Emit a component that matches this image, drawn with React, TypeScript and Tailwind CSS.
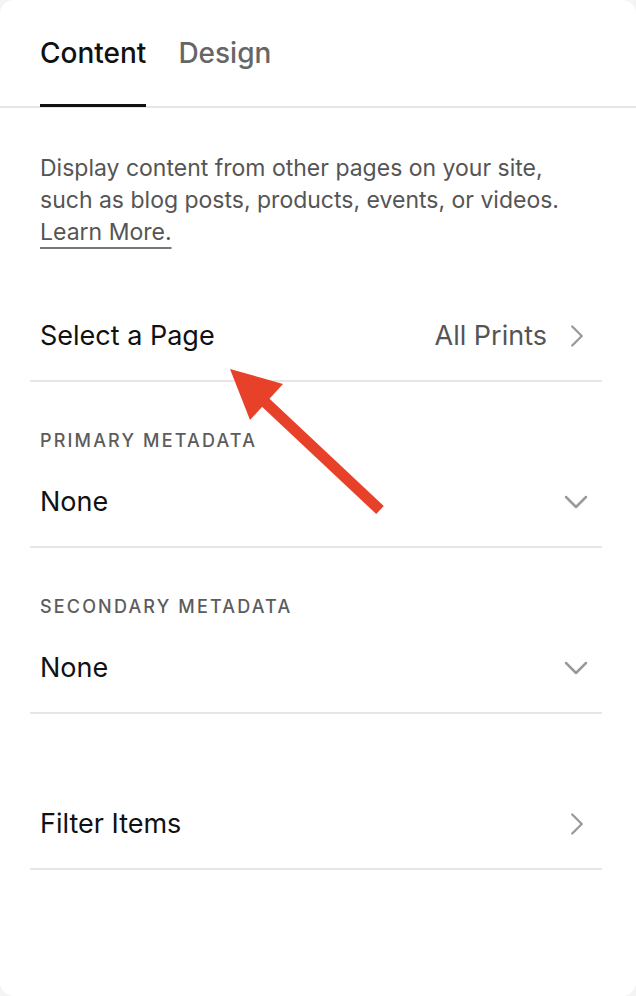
import { ChevronRight, ChevronDown } from "lucide-react";

const font = { fontFamily: "Inter, 'Liberation Sans', sans-serif" };

function Divider() {
  return <div className="ml-[30px] mr-[34px] h-[2px] bg-[#e6e6e6]" />;
}

function NavRow({ label, value }: { label: string; value?: string }) {
  return (
    <div className="flex h-[88px] items-center justify-between pl-[40px] pr-[40px]">
      <span className="text-[27px] text-[#111]">{label}</span>
      <div className="flex items-center gap-[11px]">
        {value && <span className="text-[27px] text-[#555]">{value}</span>}
        <ChevronRight className="h-[38px] w-[38px] text-[#9a9a9a]" strokeWidth={1.5} />
      </div>
    </div>
  );
}

function SelectBlock({ title }: { title: string }) {
  return (
    <div className="pt-[49px]">
      <div className="pl-[40px] text-[18px] font-medium uppercase leading-[20px] tracking-[0.12em] text-[#5c5c5c]">
        {title}
      </div>
      <div className="mt-[7px] flex h-[88px] items-center justify-between pl-[40px] pr-[40px]">
        <span className="text-[27px] text-[#111]">None</span>
        <ChevronDown className="h-[40px] w-[40px] text-[#9a9a9a]" strokeWidth={1.5} />
      </div>
    </div>
  );
}

export default function App() {
  return (
    <div className="min-h-screen bg-[#f4f4f4]" style={font}>
      <div className="relative h-[996px] w-[636px] overflow-hidden rounded-[14px] bg-white">
        {/* Tabs */}
        <div className="flex h-[108px] items-end gap-[32px] border-b-2 border-[#e6e6e6] px-[40px]">
          <div className="-mb-[1px] flex flex-col">
            <span className="text-[28px] font-medium leading-[36px] text-[#111]">Content</span>
            <div className="mt-[33px] h-[3px] bg-[#111]" />
          </div>
          <div className="-mb-[1px] flex flex-col">
            <span className="text-[28px] font-medium leading-[36px] text-[#666]">Design</span>
            <div className="mt-[33px] h-[3px]" />
          </div>
        </div>

        {/* Description */}
        <p className="px-[40px] pt-[44px] text-[23px] leading-[32px] text-[#555]">
          Display content from other pages on your site,
          <br />
          such as blog posts, products, events, or videos.
          <br />
          <span className="underline decoration-[#777] decoration-2 underline-offset-[7px]">Learn More.</span>
        </p>

        <div className="mt-[44px]">
          <NavRow label="Select a Page" value="All Prints" />
          <Divider />
          <SelectBlock title="Primary Metadata" />
          <Divider />
          <SelectBlock title="Secondary Metadata" />
          <Divider />
          <div className="h-[66px]" />
          <NavRow label="Filter Items" />
          <Divider />
        </div>

        {/* annotation arrow */}
        <svg className="absolute left-0 top-0" width="636" height="996" viewBox="0 0 636 996">
          <line x1="380" y1="510" x2="265" y2="402" stroke="#e8412a" strokeWidth="11" />
          <polygon points="230,369 283,384 250,420" fill="#e8412a" />
        </svg>
      </div>
    </div>
  );
}
